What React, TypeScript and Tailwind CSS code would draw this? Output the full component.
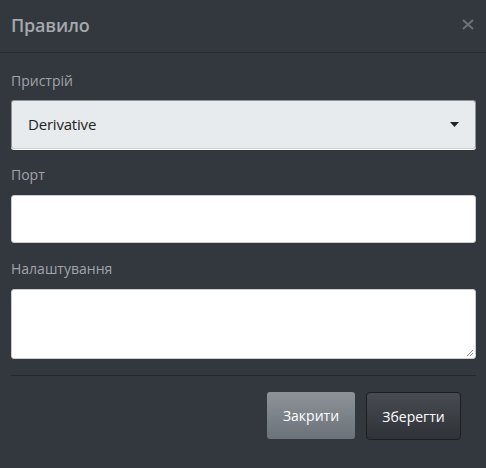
import React from 'react';

const App: React.FC = () => {
  return (
    <div
      className="w-[486px] h-[468px] bg-[#33373e] overflow-hidden"
      style={{ fontFamily: '"Open Sans", "Noto Sans", sans-serif' }}
    >
      <div className="h-[53px] flex items-center justify-between pl-[11px] pr-[12px] border-b border-[#282b30]">
        <h4 className="text-[18px] font-semibold text-[#a4a9ae] tracking-[-0.2px] -mt-[2px]">Правило</h4>
        <button className="text-[#6e7277] -mt-[4px]" aria-label="close">
          <svg width="12" height="11" viewBox="0 0 12 11">
            <path d="M1 1 L11 10 M11 1 L1 10" stroke="currentColor" strokeWidth="2" />
          </svg>
        </button>
      </div>

      <div className="pl-[11px] pr-[10px] pt-[17px]">
        <label className="block text-[14px] text-[#a0a5aa] leading-[22px] mb-[8px]">Пристрій</label>
        <div className="relative h-[49px] rounded-[3px] bg-[#e8ebee] border border-[#8f9398] border-b-[#cfd2d5] shadow-[0_1px_0_#ffffff] flex items-center pl-[16px]">
          <span className="text-[15px] text-[#222] tracking-[-0.2px]">Derivative</span>
          <svg className="absolute right-[16px] top-[21px]" width="9" height="5" viewBox="0 0 9 5">
            <path d="M0 0 H9 L4.5 5 Z" fill="#222" />
          </svg>
        </div>

        <label className="block text-[14px] text-[#a0a5aa] leading-[22px] mt-[15px] mb-[9px]">Порт</label>
        <div className="h-[48px] rounded-[3px] bg-white border border-[#c9ccd0]" />

        <label className="block text-[14px] text-[#a0a5aa] leading-[22px] mt-[15px] mb-[9px]">Налаштування</label>
        <div className="relative h-[70px] rounded-[3px] bg-white border border-[#c9ccd0]">
          <svg className="absolute right-[1px] bottom-[1px]" width="8" height="8" viewBox="0 0 8 8">
            <path d="M7 1 L1 7 M7 4 L4 7" stroke="#8a8e93" strokeWidth="1" />
          </svg>
        </div>

        <div className="mt-[16px] border-t border-[#24272b]" />

        <div className="flex justify-end gap-[11px] pt-[16px] pr-[15px]">
          <button className="w-[88px] h-[47px] rounded-[3px] bg-gradient-to-b from-[#8d9399] to-[#6b7279] text-[14px] text-white">
            Закрити
          </button>
          <button className="w-[95px] h-[48px] rounded-[4px] border border-[#1c1e21] bg-gradient-to-b from-[#484c52] to-[#2f3237] text-[14px] text-white">
            Зберегти
          </button>
        </div>
      </div>
    </div>
  );
};

export default App;
